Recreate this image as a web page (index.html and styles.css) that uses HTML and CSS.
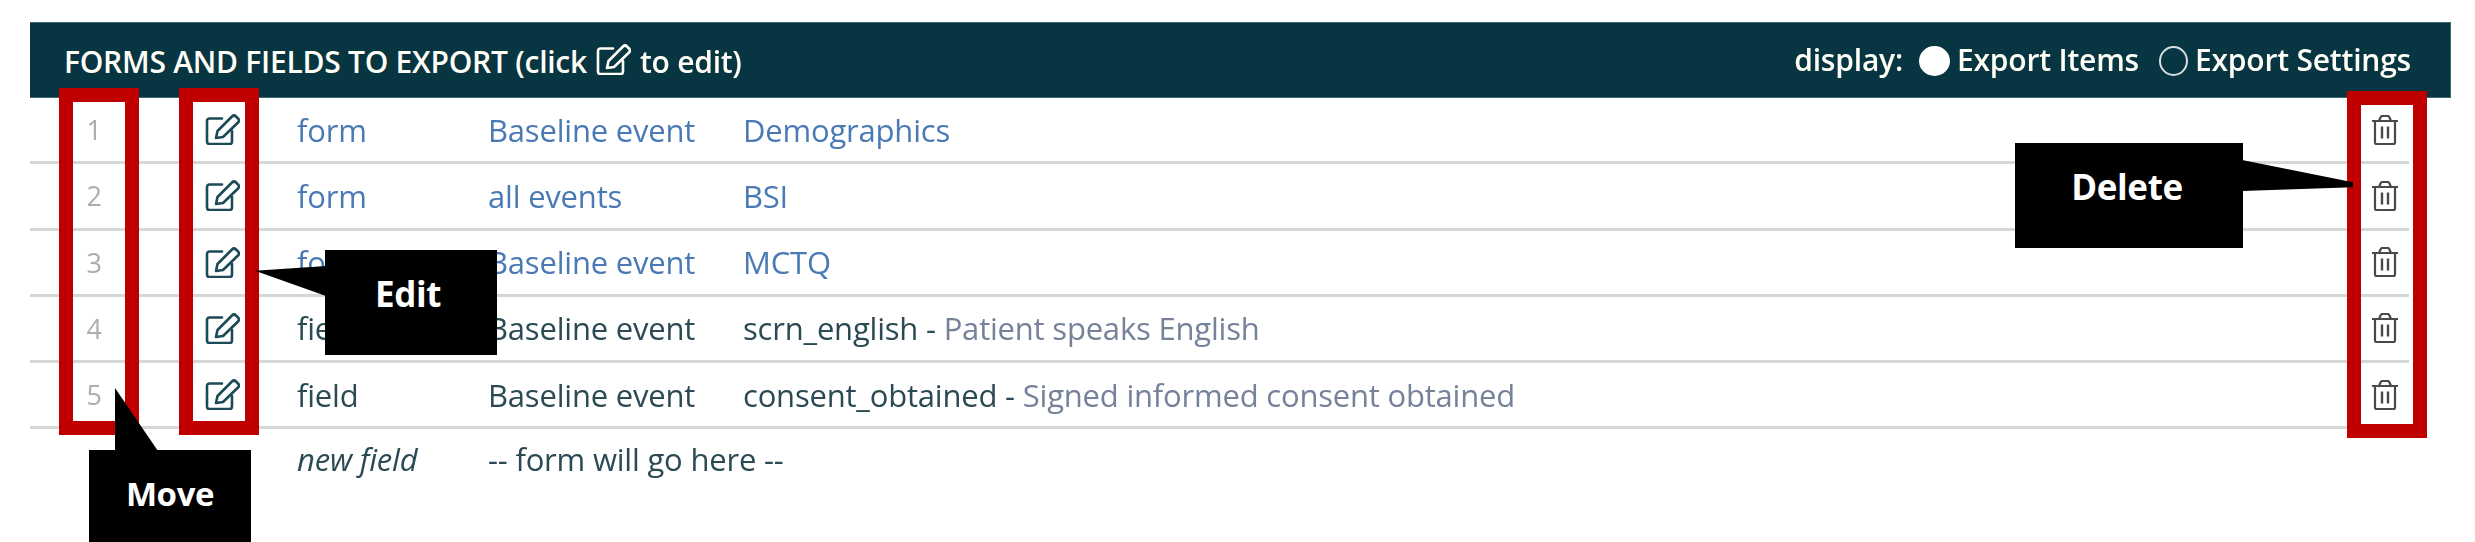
FILE: index.html
```html
<!DOCTYPE html>
<html lang="en">
  <head>
    <meta charset="UTF-8" />
    <title>Forms and fields to export</title>
    <link rel="stylesheet" href="styles.css">
  </head>
  <body>
    <svg class="defs" width="0" height="0">
      <symbol id="edit" viewBox="0 0 35 31">
        <path d="M17 4.500H4.500A2.500 2.500 0 0 0 2 7v20.500a2.500 2.500 0 0 0 2.500 2.500h20a2.500 2.500 0 0 0 2.500-2.500V17" fill="none" stroke="currentColor" stroke-width="2.600" stroke-linecap="round" />
        <path d="M11 24l1.500-7L27 2.500q2-2 4 0l2 2q2 2 0 4L18 23z" fill="none" stroke="currentColor" stroke-width="2.600" stroke-linejoin="round" />
      </symbol>
      <symbol id="trash" viewBox="0 0 26 30">
        <path d="M0.500 6h25M7 6l1.500-3.500q.5-1.500 2-1.500h5q1.500 0 2 1.500L19 6" fill="none" stroke="currentColor" stroke-width="2.200" stroke-linecap="round" />
        <path d="M3 6v21.500Q3 29 4.500 29h17q1.500 0 1.500-1.500V6" fill="none" stroke="currentColor" stroke-width="2.200" />
        <path d="M10 11.500v12M16 11.500v12" fill="none" stroke="currentColor" stroke-width="2.400" />
      </symbol>
    </svg>

    <div class="panel">
      <div class="panel-head">
        <div class="panel-title">
          FORMS AND FIELDS TO EXPORT (click
          <svg class="icon-edit"><use href="#edit" /></svg>
          to edit)
        </div>
        <div class="display-opts">
          <span>display:</span>
          <span class="radio on"></span>
          <span class="opt-first">Export Items</span>
          <span class="radio"></span>
          <span>Export Settings</span>
        </div>
      </div>

      <div class="row link">
        <div class="num">1</div>
        <svg class="icon-edit"><use href="#edit" /></svg>
        <div>form</div>
        <div>Baseline event</div>
        <div>Demographics</div>
        <svg class="icon-trash"><use href="#trash" /></svg>
      </div>
      <div class="row link">
        <div class="num">2</div>
        <svg class="icon-edit"><use href="#edit" /></svg>
        <div>form</div>
        <div>all events</div>
        <div>BSI</div>
        <svg class="icon-trash"><use href="#trash" /></svg>
      </div>
      <div class="row link">
        <div class="num">3</div>
        <svg class="icon-edit"><use href="#edit" /></svg>
        <div>form</div>
        <div>Baseline event</div>
        <div>MCTQ</div>
        <svg class="icon-trash"><use href="#trash" /></svg>
      </div>
      <div class="row">
        <div class="num">4</div>
        <svg class="icon-edit"><use href="#edit" /></svg>
        <div>field</div>
        <div>Baseline event</div>
        <div>scrn_english - <span class="desc">Patient speaks English</span></div>
        <svg class="icon-trash"><use href="#trash" /></svg>
      </div>
      <div class="row">
        <div class="num">5</div>
        <svg class="icon-edit"><use href="#edit" /></svg>
        <div>field</div>
        <div>Baseline event</div>
        <div>consent_obtained - <span class="desc">Signed informed consent obtained</span></div>
        <svg class="icon-trash"><use href="#trash" /></svg>
      </div>
      <div class="row new-row">
        <div></div>
        <div></div>
        <div class="new-label">new field</div>
        <div class="new-hint">-- form will go here --</div>
      </div>
    </div>

    <!-- Annotations drawn over the screenshot -->
    <div class="mark mark-move"></div>
    <div class="mark mark-edit"></div>
    <div class="mark mark-delete"></div>

    <div class="callout callout-edit">Edit</div>
    <div class="callout callout-move">Move</div>
    <div class="callout callout-delete">Delete</div>
    <div class="tail tail-edit"></div>
    <div class="tail tail-move"></div>
    <div class="tail tail-delete"></div>
  </body>
</html>
```

FILE: styles.css
```css
* {
  margin: 0;
  padding: 0;
  box-sizing: border-box;
}
html,
body {
  height: 100%;
  width: 100%;
  overflow: hidden;
  background: #fff;
  font-family: "Open Sans", sans-serif;
}
body {
  position: relative;
  padding: 22px 24px 0 30px;
}
.defs {
  position: absolute;
}

/* the reference is an upscaled capture, so everything under the marks is a bit soft */
.panel {
  filter: blur(0.45px);
}
.panel-head {
  height: 76px;
  display: flex;
  justify-content: space-between;
  align-items: center;
  padding: 0 39px 0 34px;
  background: #073541;
  border: 1px solid #3f6670;
  border-width: 1px 1px 1px 0;
  color: #fffef6;
  font-size: 30px;
  font-weight: 600;
}
.panel-title {
  display: flex;
  align-items: center;
  gap: 9px;
  padding-top: 3px;
  letter-spacing: -0.25px;
}
.panel-title .icon-edit {
  color: #fffef6;
  margin-top: -5px;
}
.display-opts {
  display: flex;
  align-items: center;
  gap: 7px;
  margin-top: -2px;
  letter-spacing: -0.2px;
}
.opt-first {
  margin-right: 5px;
}
.radio {
  width: 29px;
  height: 30px;
  margin: 4px 0 0 8px;
  border: 2px solid #d8dedf;
  border-radius: 50%;
}
.radio.on {
  width: 31px;
  background: #fff;
  border-color: #fff;
  margin-left: 9px;
}

.row {
  width: 2379px;
  height: 66.25px;
  display: grid;
  grid-template-columns: 128px 139px 191px 255px 1fr 37px;
  align-items: center;
  border-bottom: 3px solid #d6d6d6;
  color: #2b4a54;
  font-size: 31px;
  font-weight: 500;
  letter-spacing: -0.2px;
}
.row.link {
  color: #4a7ab5;
}
.row .num {
  text-align: center;
  font-size: 27px;
  font-weight: 400;
  color: #adadad;
}
.row .icon-edit {
  margin-left: 47px;
}
.icon-edit {
  display: block;
  width: 35px;
  height: 31px;
  color: #1c4a57;
}
.icon-trash {
  display: block;
  width: 26px;
  height: 30px;
  color: #474a4d;
}
.desc {
  color: #75829a;
}
.new-row {
  border-bottom: 0;
  margin-top: -3px;
}
.new-label {
  font-style: italic;
}
.new-hint {
  white-space: nowrap;
}

.mark {
  position: absolute;
  border: 14px solid #c00000;
}
.mark-move {
  left: 59px;
  top: 88px;
  width: 80px;
  height: 347px;
}
.mark-edit {
  left: 179px;
  top: 88px;
  width: 80px;
  height: 347px;
}
.mark-delete {
  left: 2347px;
  top: 91px;
  width: 80px;
  height: 347px;
}

.callout {
  position: absolute;
  display: flex;
  justify-content: center;
  background: #000;
  color: #fff;
  font-size: 35px;
  font-weight: 700;
  letter-spacing: -0.4px;
}
.callout-edit {
  left: 325px;
  top: 250px;
  width: 172px;
  height: 105px;
  padding: 20px 6px 0 0;
}
.callout-move {
  left: 89px;
  top: 450px;
  width: 162px;
  height: 92px;
  padding-top: 21px;
  font-size: 33px;
}
.callout-delete {
  left: 2015px;
  top: 143px;
  width: 228px;
  height: 105px;
  padding: 20px 4px 0 0;
}

.tail {
  position: absolute;
  background: #000;
}
.tail-edit {
  left: 255px;
  top: 266px;
  width: 71px;
  height: 30px;
  clip-path: polygon(0 16%, 100% 0, 100% 100%);
}
.tail-move {
  left: 115px;
  top: 388px;
  width: 43px;
  height: 63px;
  clip-path: polygon(0 0, 100% 100%, 0 100%);
}
.tail-delete {
  left: 2242px;
  top: 160px;
  width: 111px;
  height: 31px;
  clip-path: polygon(0 0, 100% 72%, 100% 88%, 0 100%);
}
```
